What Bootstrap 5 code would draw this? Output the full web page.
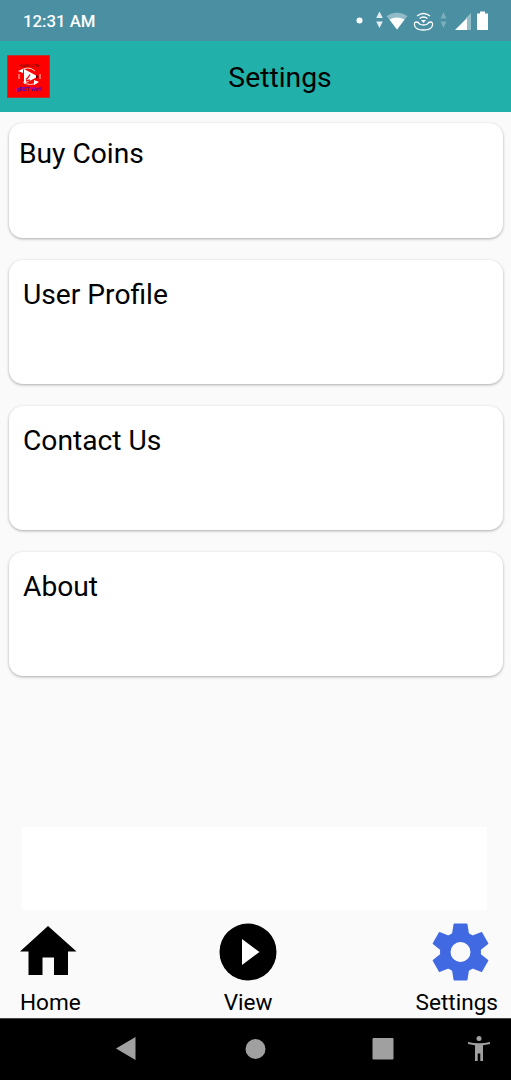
<!DOCTYPE html>
<html lang="en">
<head>
<meta charset="utf-8">
<meta name="viewport" content="width=device-width, initial-scale=1">
<title>Settings</title>
<link href="https://cdn.jsdelivr.net/npm/bootstrap@5.3.0/dist/css/bootstrap.min.css" rel="stylesheet">
<style>
body{font-family:Roboto,sans-serif;background:#fafafa;color:#000;height:1080px;overflow:hidden}
svg{display:block;flex:none}
.status-bar{height:41px;background:#4a8fa2;color:#fff;padding-left:23px;padding-top:2px;font-size:16.8px;font-weight:500}
.app-header{height:71px;background:#22b1aa;padding:0 7px}
.app-title{font-size:28.3px;line-height:34px;padding:3px 0 0 6px}
.card-stack{gap:22px;padding:11px 8.5px 0}
.option{height:124px;border:0;border-radius:14px;background:#fff;box-shadow:0 1px 3px rgba(0,0,0,.32);font-size:28.2px;line-height:34px;padding:18px 14.5px}
.option-first{height:115px;padding:14px 10.5px}
.ad-slot{height:83px;margin:0 24px 13px 22px;background:#fff}
.tabs{height:95px;padding:0 13px 0 20px}
.tab{color:#000;font-size:22.6px;line-height:28px}
.tab svg{margin-bottom:9px;overflow:visible}
.system-nav{height:62px;background:#000;border-top:1px solid #444}
</style>
</head>
<body class="d-flex flex-column">
<div class="status-bar d-flex align-items-center flex-shrink-0">
  <span>12:31 AM</span>
  <svg class="ms-auto" width="161" height="39" viewBox="350 0 161 39" fill="#fff">
    <circle cx="359.500" cy="18.500" r="3"/>
    <path d="M379.500 9.500l3.300 6.500h-6.600zM379.500 26l3.300-6.500h-6.600z" opacity=".85"/>
    <path d="M386.500 14q10.500-7 21 0L397 27.500z" opacity=".4"/>
    <path d="M389.500 17.500q7.500-4 15 0L397 27.500z"/>
    <g fill="none" stroke="#fff" stroke-width="1.300"><path d="M417 14q6.500-5 13 0M419.500 16.500q4-3 8 0"/><path d="M414.500 23q-.5-3 2-3 2 0 3 2 4 2 8 0 1-2 3-2 2.500 0 2 3-.5 5-9 5t-9-5z"/></g>
    <path d="M421 18h5l-2.500 3z"/>
    <path d="M443.500 10l3 6.500h-6zM443.500 26l3-6.500h-6z" opacity=".28"/>
    <path d="M471 11v17h-5V16z" opacity=".4"/><path d="M455 28l12-12v12z"/>
    <path d="M477 11.500h3v-2h5v2h3V28h-11z"/>
  </svg>
</div>
<header class="app-header d-flex align-items-center flex-shrink-0">
  <svg width="43" height="43" viewBox="0 0 43 43">
    <rect width="43" height="43" fill="#f00"/>
    <rect x=".5" y=".5" width="42" height="42" fill="none" stroke="#a04a40" stroke-width=".7"/>
    <text x="22.500" y="11.500" font-size="4" text-anchor="middle" fill="#610" textLength="19">EARN COIN</text>
    <path d="M17 14l14 7.500-14 7.500z" fill="#fff"/>
    <path d="M13 16q8-6 15 0M12 19v5M31 27q-8 5-15 0M33 19v5" fill="none" stroke="#ffd6c5" stroke-width="1"/>
    <path d="M11 16l5-2v4zM32 27l-5-2v5z" fill="#fff"/>
    <path d="M19 24.500l2-2 2-3M19 26l4-1" stroke="#e11" stroke-width="1.300" fill="none"/>
    <path d="M29 20l3 1.500-3 2" fill="#501"/>
    <text x="22" y="35.500" font-size="5.500" font-weight="700" text-anchor="middle" fill="#3500c8" textLength="25" lengthAdjust="spacingAndGlyphs">gRIET VAHI</text>
  </svg>
  <h1 class="app-title flex-grow-1 text-center m-0 fw-normal">Settings</h1>
</header>
<main class="flex-grow-1 d-flex flex-column">
  <div class="card-stack d-flex flex-column">
    <div class="card option option-first">Buy Coins</div>
    <div class="card option">User Profile</div>
    <div class="card option">Contact Us</div>
    <div class="card option">About</div>
  </div>
  <div class="ad-slot mt-auto"></div>
  <nav class="tabs d-flex justify-content-between">
    <a class="tab d-flex flex-column align-items-center text-decoration-none" href="#">
      <svg width="60" height="57" viewBox="20 923 60 57"><path d="M48 926l28.500 25.500H68V975H54V957.500H42.500V975H28.500V951.500H20z"/></svg>
      <span>Home</span></a>
    <a class="tab d-flex flex-column align-items-center text-decoration-none" href="#">
      <svg width="58" height="57" viewBox="219.500 923 58 57"><circle cx="248.500" cy="952" r="28.500"/><path d="M242.500 939v26l17.500-13z" fill="#fff"/></svg>
      <span>View</span></a>
    <a class="tab d-flex flex-column align-items-center text-decoration-none" href="#">
      <svg width="58" height="57" viewBox="427.500 923 58 57"><circle cx="460" cy="952" r="15" fill="none" stroke="#4169e1" stroke-width="11"/><g fill="#4169e1"><path id="tooth" d="M454 923.500h12q1 0 1 1l1.500 9.500v8h-17v-8l1.500-9.500q0-1 1-1z"/><use href="#tooth" transform="rotate(60 460 952)"/><use href="#tooth" transform="rotate(120 460 952)"/><use href="#tooth" transform="rotate(180 460 952)"/><use href="#tooth" transform="rotate(240 460 952)"/><use href="#tooth" transform="rotate(300 460 952)"/></g><circle cx="460" cy="952" r="10" fill="#fafafa"/></svg>
      <span>Settings</span></a>
  </nav>
</main>
<footer class="system-nav flex-shrink-0">
  <svg width="511" height="61" viewBox="0 1019 511 61" fill="#a0a0a0">
    <path d="M116 1048.500L135.500 1037v23z"/>
    <circle cx="255.500" cy="1049" r="10"/>
    <rect x="372.500" y="1038" width="21" height="21.500" rx="1"/>
    <circle cx="479" cy="1038.500" r="2.500"/>
    <path d="M468 1042q11 2.500 22 0v2l-7 1.200V1061h-2.700v-7.500h-2.600v7.500H475v-15.800l-7-1.200z"/>
  </svg>
</footer>
<script src="https://cdn.jsdelivr.net/npm/bootstrap@5.3.0/dist/js/bootstrap.bundle.min.js"></script>
</body>
</html>
